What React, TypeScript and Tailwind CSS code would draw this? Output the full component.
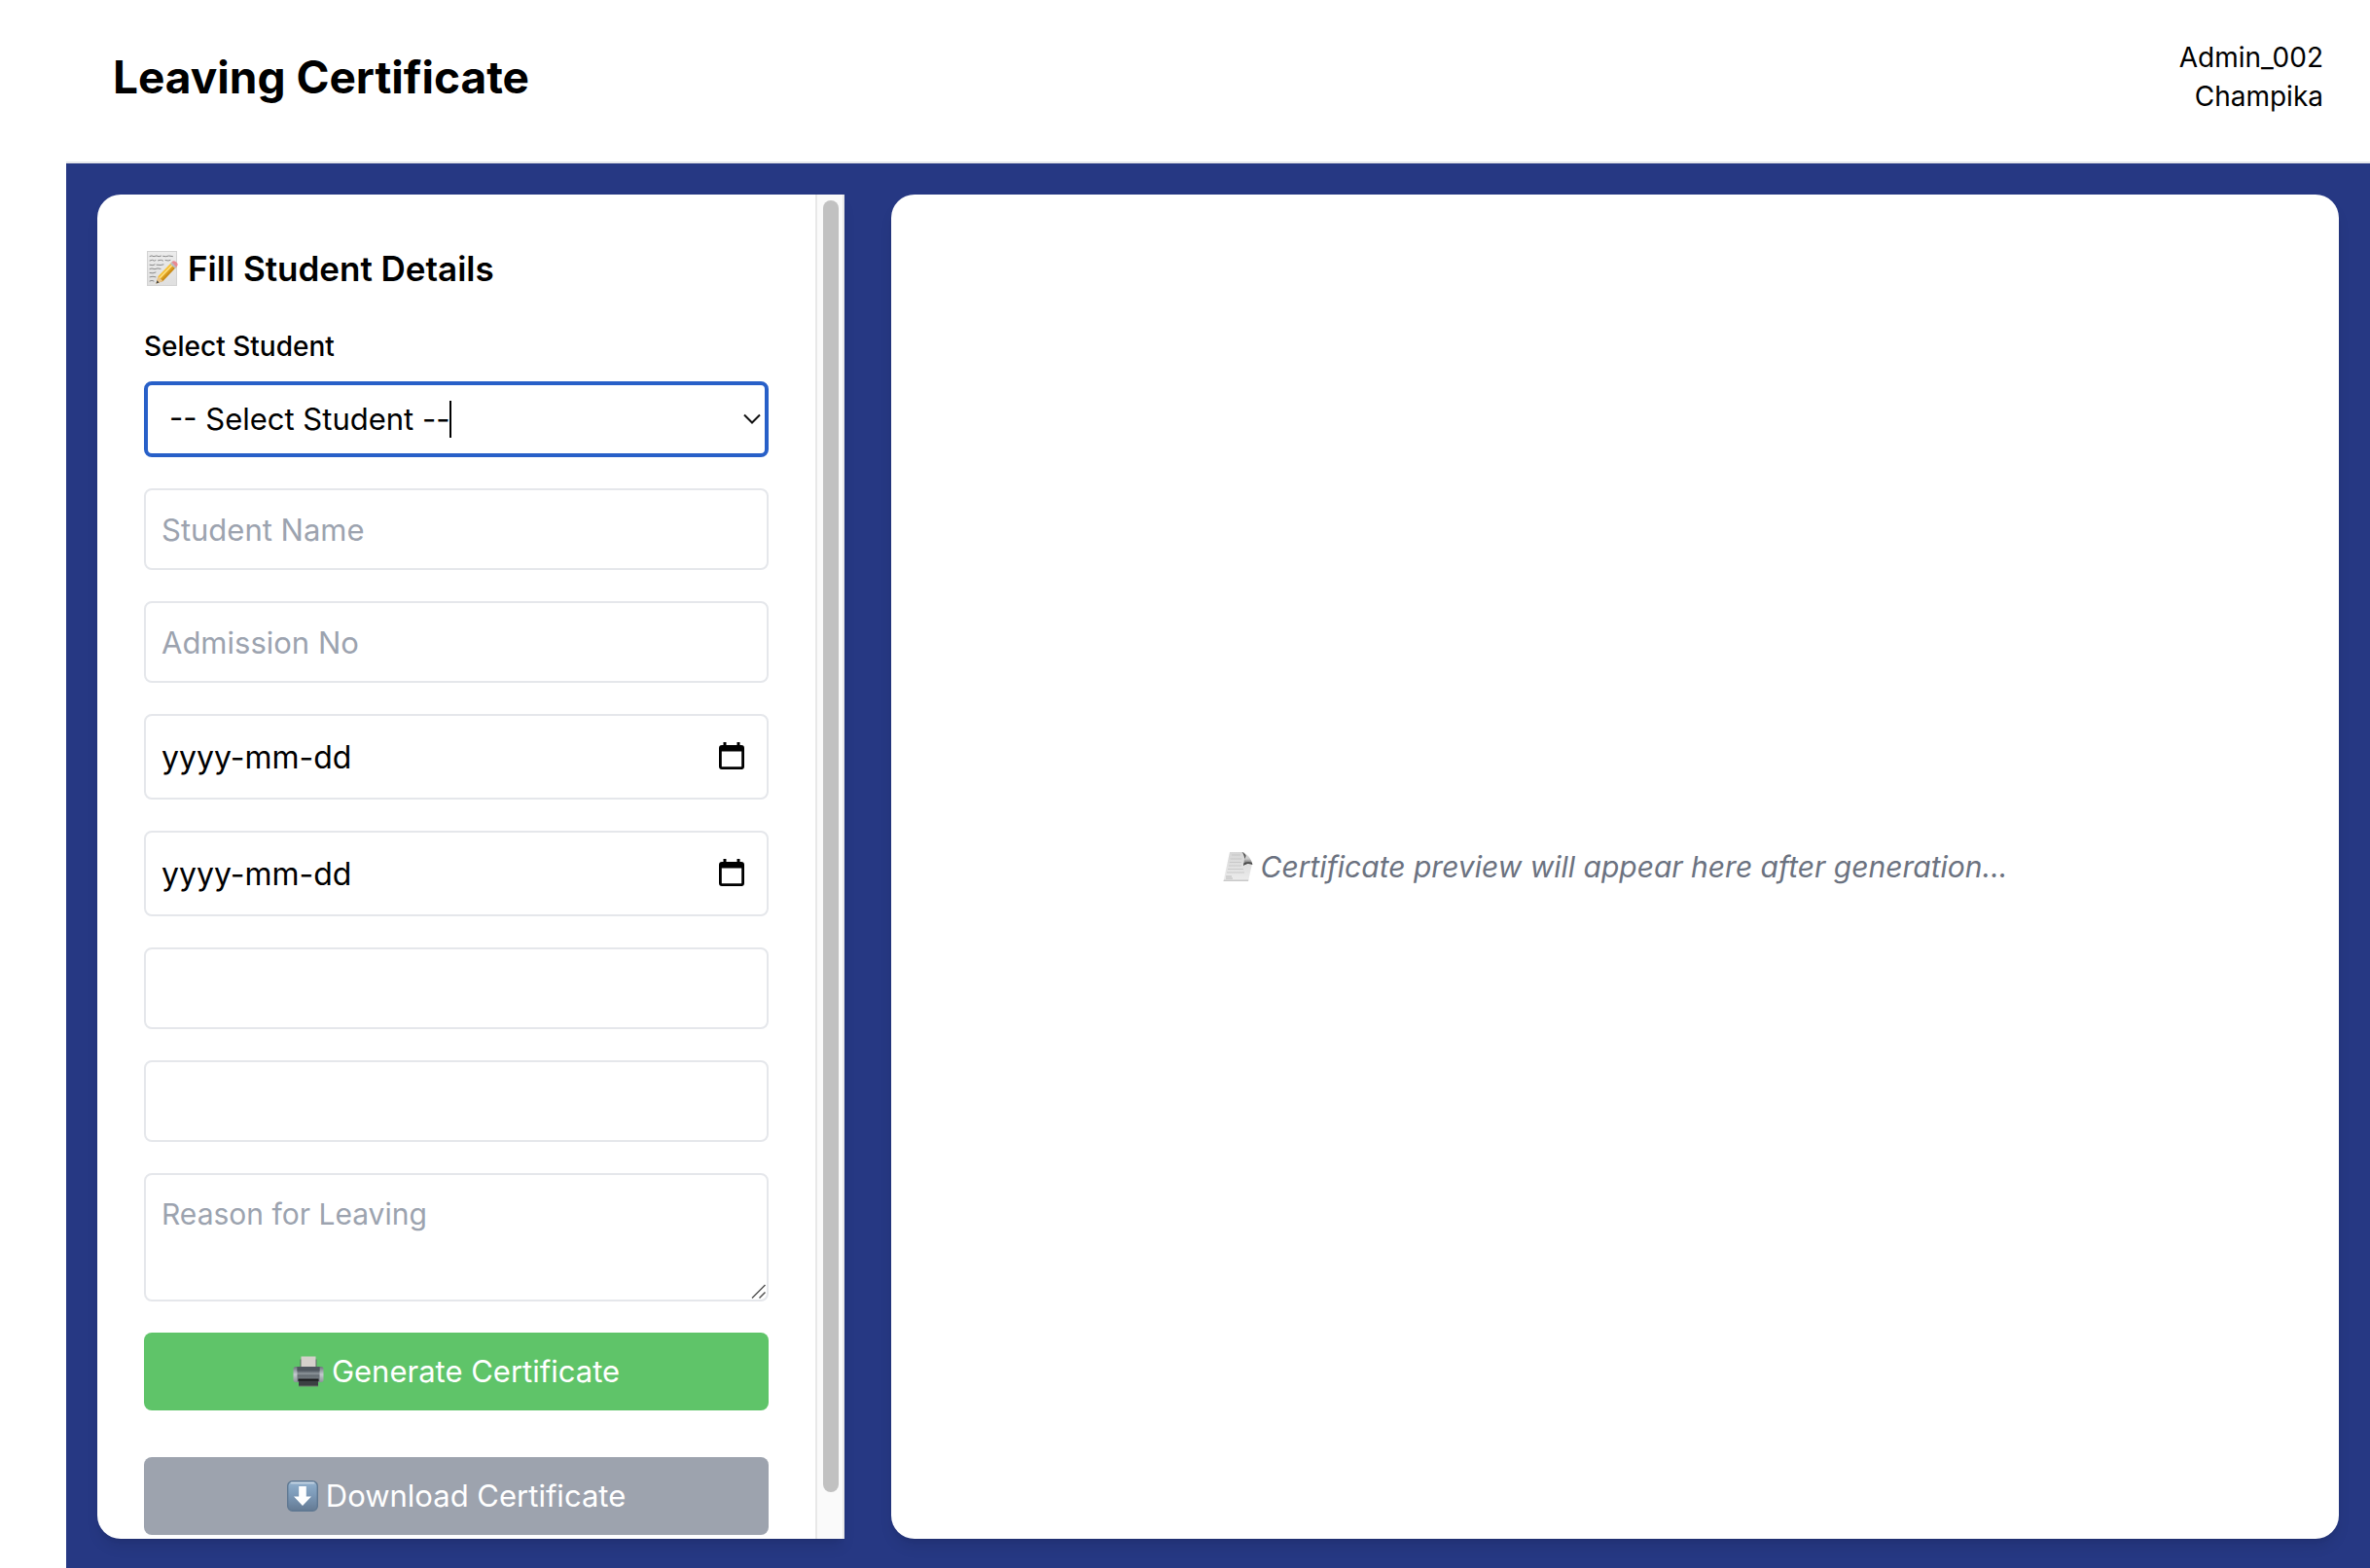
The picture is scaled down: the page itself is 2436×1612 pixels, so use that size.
import React from "react";

const fieldClass =
  "block w-full rounded-lg border-2 border-[#e5e7eb] bg-white px-4 leading-[48px] text-black outline-none";

function MemoIcon() {
  return (
    <svg width="34" height="36" viewBox="0 0 34 36" fill="none" aria-hidden="true" className="shrink-0">
      <defs>
        <linearGradient id="memo-paper" x1="0" y1="0" x2="0" y2="1">
          <stop offset="0" stopColor="#ececec" />
          <stop offset="1" stopColor="#dfdfdf" />
        </linearGradient>
        <linearGradient id="memo-pencil" x1="17" y1="17" x2="23" y2="23" gradientUnits="userSpaceOnUse">
          <stop offset="0" stopColor="#fbd65a" />
          <stop offset="0.5" stopColor="#f3b92f" />
          <stop offset="1" stopColor="#c98a14" />
        </linearGradient>
      </defs>
      <rect x="0.5" y="0.5" width="30" height="35" fill="url(#memo-paper)" stroke="#d3d3d3" />
      <g stroke="#8b8b8b" strokeWidth="1" strokeLinecap="round">
        <path d="M3 5.500l2-.6 2 .8 3-.8 2 .8 2.500-.6M16.500 5.300l3 .4 3-.7 4 .6" />
        <path d="M3 10l2.500-.7 2 .8 1.500-.5M11.500 9.800l3-.5 2 .7M19 9.500l3 .5 2-.6" />
        <path d="M3 14.300l3 .4 2-.8M10 14.200l4 .3 3-.6" />
        <path d="M3 18.500l2-.5 3 .7 3-.8 3 .5" />
        <path d="M3 22.500l3 .3 3-.8" />
        <path d="M3 26.800l3-.5 3 .5M3 31l2-.6 2 .6" />
      </g>
      <path d="M9.500 33.500l2-7.500 14-14.500 5 4.800-14 14.600z" fill="url(#memo-pencil)" />
      <path d="M9.500 33.500l2-7.500 5 4.900z" fill="#e8c48c" />
      <path d="M9.500 33.500l.9-3.200 2.200 2.100z" fill="#444" />
      <path d="M13.300 27.800L27 13.600" stroke="#ffe58a" strokeWidth="1.300" />
      <path d="M23.900 13.200l1.900-2 4.900 4.800-1.900 2z" fill="#b9bec4" />
      <path d="M25.500 11.500c1-1.300 2.600-1.600 4.200-.4 1.900 1.300 2.700 3 1.200 4.700l-.7.600z" fill="#e98a92" />
    </svg>
  );
}

function PageCurlIcon() {
  return (
    <svg width="31" height="32" viewBox="0 0 31 32" aria-hidden="true" className="shrink-0">
      <defs>
        <linearGradient id="curl-page" x1="0" y1="0" x2="0" y2="1">
          <stop offset="0" stopColor="#d6d6d6" />
          <stop offset="1" stopColor="#ececec" />
        </linearGradient>
        <linearGradient id="curl-fold" x1="0" y1="0" x2="0" y2="1">
          <stop offset="0" stopColor="#e8e8e8" />
          <stop offset="0.500" stopColor="#c8c8c8" />
          <stop offset="1" stopColor="#3f3f3f" />
        </linearGradient>
      </defs>
      <path d="M7 1h14.500c2 3 5.500 7 8.500 12l-4 18H.5z" fill="url(#curl-page)" />
      <path d="M.5 31l.5-1.500h25.300L26 31z" fill="#c9c9c9" />
      <path d="M9 4h9M7.500 8h12M6.800 11.500h12M6 15h13M5 18.500h16M4 22h18" stroke="#c3c3c3" strokeWidth="0.800" />
      <path d="M3 26h6M3 28h7" stroke="#b4b4b4" strokeWidth="0.900" />
      <path d="M19.500 1c2.800 3 3 7 1.500 14 3-2.500 6-2.300 9.300-1.300C29.500 8 24.500 2 19.500 1z" fill="url(#curl-fold)" />
      <path d="M19.500 1c2 .5 3.500 2 4.200 3.700-.5 1.800-1.200 2.500-1.500 3.300C22 5 21 2.500 19.500 1z" fill="#555" />
      <path d="M21 15c3-2.500 6-2.300 9.300-1.300l-.4-1.800c-3-1-6-.6-8.200.4z" fill="#4a4a4a" />
    </svg>
  );
}

function PrinterIcon() {
  return (
    <svg width="32" height="32" viewBox="0 0 32 32" aria-hidden="true" className="shrink-0">
      <defs>
        <linearGradient id="printer-body" x1="0" y1="0" x2="0" y2="1">
          <stop offset="0" stopColor="#505860" />
          <stop offset="0.350" stopColor="#6c747b" />
          <stop offset="0.450" stopColor="#90979d" />
          <stop offset="0.550" stopColor="#666e74" />
          <stop offset="1" stopColor="#7d8489" />
        </linearGradient>
        <linearGradient id="printer-side" x1="0" y1="0" x2="0" y2="1">
          <stop offset="0" stopColor="#6c757c" />
          <stop offset="0.500" stopColor="#c4cacf" />
          <stop offset="1" stopColor="#8b9398" />
        </linearGradient>
      </defs>
      <path d="M7.500 3.500h17v9h-17z" fill="#5d6a64" />
      <path d="M8.500.5h15v12h-15z" fill="#d5d1cb" />
      <rect x="0.500" y="11" width="31" height="16" rx="2.500" fill="url(#printer-side)" />
      <rect x="4.500" y="11" width="23" height="16" fill="url(#printer-body)" />
      <path d="M4.500 11.500h23v4h-23z" fill="#4e565e" />
      <path d="M5.500 23.500h21V26h-21z" fill="#17191b" />
      <path d="M6 25.500h20V31H6z" fill="#3c4043" />
      <path d="M6 30.500h20v1H6z" fill="#6e7a70" />
    </svg>
  );
}

function DownArrowIcon() {
  return (
    <svg width="32" height="32" viewBox="0 0 32 32" aria-hidden="true" className="shrink-0">
      <defs>
        <linearGradient id="arrow-tile" x1="0" y1="0" x2="0" y2="1">
          <stop offset="0" stopColor="#a9c0d5" />
          <stop offset="0.150" stopColor="#8aa9c6" />
          <stop offset="0.450" stopColor="#7d9ab8" />
          <stop offset="1" stopColor="#647a93" />
        </linearGradient>
      </defs>
      <rect x="0.700" y="0.700" width="30.600" height="30.600" rx="5" fill="url(#arrow-tile)" stroke="#5f7892" strokeWidth="1.400" />
      <path d="M4.500 2.500h23" stroke="#c9d8e5" strokeWidth="1.600" strokeLinecap="round" />
      <path d="M12.200 6h7.600v10.500h5.200L16 26 7 16.500h5.200z" fill="#fff" />
    </svg>
  );
}

function CalendarIcon() {
  return (
    <svg width="26" height="28" viewBox="0 0 26 28" aria-hidden="true">
      <path d="M4.500 0h3v3h11V0h3v3H23a3 3 0 0 1 3 3v19a3 3 0 0 1-3 3H3a3 3 0 0 1-3-3V6a3 3 0 0 1 3-3h1.500zM2.800 9.500v15.700h20.400V9.500z" fill="#000" fillRule="evenodd" />
    </svg>
  );
}

function TextField({ label, placeholder }: { label: string; placeholder?: string }) {
  return (
    <input
      type="text"
      aria-label={label}
      placeholder={placeholder}
      className={`${fieldClass} h-[84px] text-[31px] placeholder:text-[#9ca3af]`}
    />
  );
}

function DateField({ label }: { label: string }) {
  return (
    <div className="relative">
      <input
        type="text"
        aria-label={label}
        placeholder="yyyy-mm-dd"
        className={`${fieldClass} h-[88px] pr-20 text-[32px] placeholder:text-black`}
      />
      <button type="button" aria-label={`Choose ${label}`} className="absolute inset-y-0 right-[25px] flex items-center pb-0.5">
        <CalendarIcon />
      </button>
    </div>
  );
}

export default function App() {
  return (
    <div className="flex h-screen flex-col bg-white pl-[68px] font-['Inter',sans-serif] text-black">
      <header className="flex h-[168px] shrink-0 items-center justify-between border-b-2 border-[#e5e7eb] px-12 pb-2">
        <h1 className="text-[46px] leading-[56px] font-bold">Leaving Certificate</h1>
        <div className="text-right text-[28px] leading-[40px]">
          <p>Admin_002</p>
          <p>Champika</p>
        </div>
      </header>

      <main className="flex min-h-0 flex-1 gap-12 bg-[#263883] px-8 pt-8 pb-[30px]">
        <section className="flex w-1/3 shrink-0 overflow-hidden rounded-l-3xl bg-white shadow-lg">
          <form className="min-w-0 flex-1 overflow-y-auto p-12 [scrollbar-width:none]" onSubmit={(e) => e.preventDefault()}>
            <h2 className="flex items-center gap-2 pl-[3px] text-[35px] leading-[56px] font-semibold">
              <MemoIcon />
              <span>Fill Student Details</span>
            </h2>

            <label htmlFor="student" className="mt-8 block text-[28px] leading-[40px] font-medium">
              Select Student
            </label>
            <div className="relative mt-4">
              <select
                id="student"
                className="block h-[78px] w-full appearance-none rounded-lg border-4 border-[#2860c8] bg-white px-[22px] text-[31px] leading-[48px] text-black outline-none"
              >
                <option>-- Select Student --</option>
              </select>
              <span aria-hidden="true" className="pointer-events-none absolute top-5 left-[314px] h-[38px] w-0.5 bg-black" />
              <svg
                width="18"
                height="12"
                viewBox="0 0 18 12"
                fill="none"
                aria-hidden="true"
                className="pointer-events-none absolute top-[33px] right-2"
              >
                <path d="M1 1.500L9 9.500L17 1.500" stroke="#111" strokeWidth="2" />
              </svg>
            </div>

            <div className="mt-8 flex flex-col gap-8">
              <TextField label="Student Name" placeholder="Student Name" />
              <TextField label="Admission No" placeholder="Admission No" />
              <DateField label="date of admission" />
              <DateField label="date of leaving" />
              <TextField label="Class" />
              <TextField label="Medium" />
              <div className="relative">
                <textarea
                  aria-label="Reason for Leaving"
                  placeholder="Reason for Leaving"
                  className={`${fieldClass} h-[132px] resize-none py-4 text-[30px] placeholder:text-[#9ca3af]`}
                />
                <svg
                  width="16"
                  height="16"
                  viewBox="0 0 16 16"
                  aria-hidden="true"
                  className="pointer-events-none absolute right-0.5 bottom-0.5"
                >
                  <path d="M1 14.500L14.500 1M8.500 14.500L14.500 8.500" stroke="#555" strokeWidth="1.500" />
                </svg>
              </div>
              <button
                type="submit"
                className="flex h-20 w-full items-center justify-center gap-2 rounded-lg bg-[#5fc469] text-[31px] leading-[48px] text-white"
              >
                <PrinterIcon />
                <span>Generate Certificate</span>
              </button>
            </div>
            <button
              type="button"
              className="mt-12 flex h-20 w-full items-center justify-center gap-2 rounded-lg bg-[#9da3ae] text-[31px] leading-[48px] text-white"
            >
              <DownArrowIcon />
              <span>Download Certificate</span>
            </button>
          </form>
          <div aria-hidden="true" className="w-[30px] shrink-0 border-x-2 border-[#e8e8e8] bg-[#fafafa] px-1.5 pt-1.5 pb-12">
            <div className="h-full w-4 rounded-full bg-[#c1c1c1]" />
          </div>
        </section>

        <section className="flex min-w-0 flex-1 items-center justify-center rounded-3xl bg-white shadow-lg">
          <p className="flex items-center gap-2 text-[30px] leading-[48px] text-[#6b7280] italic">
            <PageCurlIcon />
            <span>Certificate preview will appear here after generation...</span>
          </p>
        </section>
      </main>
    </div>
  );
}
